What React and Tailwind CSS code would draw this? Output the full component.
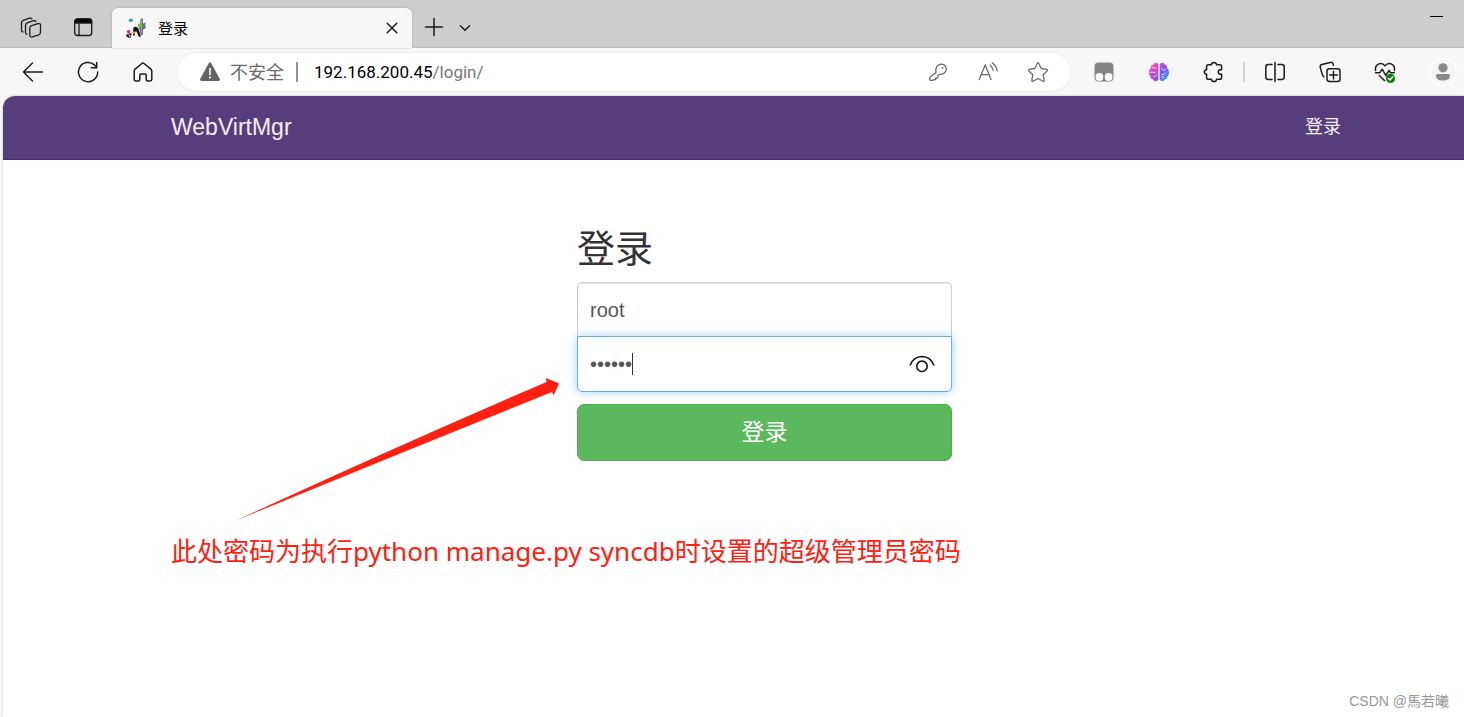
import React from "react";

function Icon({ size = "size-6", stroke = "#1b1b1b", width = 1.3, children }) {
  return (
    <svg
      viewBox="0 0 24 24"
      className={`${size} shrink-0`}
      fill="none"
      stroke={stroke}
      strokeWidth={width}
      strokeLinecap="round"
      strokeLinejoin="round"
      aria-hidden="true"
    >
      {children}
    </svg>
  );
}

function IconButton({ label, className = "w-[55px]", children }) {
  return (
    <button type="button" aria-label={label} className={`flex h-10 shrink-0 items-center justify-center ${className}`}>
      {children}
    </button>
  );
}

function Favicon() {
  return (
    <svg viewBox="0 0 20 20" className="size-5 shrink-0" aria-hidden="true">
      <path d="M14.500 0.500h2.500v5l2.500-1v6l-2.500 1v5l-2.500 1-.5-5-1-2 1-3z" fill="#70747f" />
      <path d="M15 1h1v14h-1z" fill="#9a9dab" />
      <ellipse cx="4.800" cy="2.200" rx="2.100" ry="1.700" fill="#1ea0dc" />
      <circle cx="13.800" cy="7.400" r="1.900" fill="#6cc51e" />
      <path d="M7.500 9.500l2-.8 2.600 1.100 1.400 4.200 1.300 4.500-1.800.6-2.300-4.500-1.500-.3-.8 3.500-1.400-.3v-4z" fill="#141414" />
      <path d="M.8 16l2 .5 1-1.500 1.800.5L5 19.500l-2.300.3L0 18.500z" fill="#222" />
      <path d="M3 17.200l1.400-.4v1.700H3z" fill="#fff" />
      <path d="M9 13.800l1.600-.3 1.600 4.700-2.200.2z" fill="#ededed" />
      <circle cx="2.600" cy="13.800" r="1.800" fill="#e2148c" />
      <circle cx="7.600" cy="14.600" r="1.400" fill="#f2b01e" />
    </svg>
  );
}

function TabStrip() {
  return (
    <header className="flex h-12 items-end border-b border-[#bfbfbf] bg-[#cdcdcd]">
      <div className="flex h-10 items-center pl-[5px]">
        <IconButton label="工作区" className="w-[52px]">
          <Icon>
            <path d="M12.500 10.700l6.500-2q2.500-.6 2.500 1.700v6.900q0 1.900-1.700 2.500l-6.500 2.100q-2.500.6-2.500-1.700v-7q0-1.900 1.700-2.500z" />
            <path d="M7.900 19.300q-1.400-.3-1.400-2v-7q0-1.900 1.700-2.500L14.500 5.700q1.900-.5 2.400.9" />
            <path d="M3.900 16.900q-1.400-.3-1.400-2v-7q0-1.900 1.700-2.500L10.500 3.200q1.900-.5 2.400.5" />
          </Icon>
        </IconButton>
        <IconButton label="标签操作菜单" className="w-[52px]">
          <Icon>
            <rect x="3.700" y="3.900" width="17" height="16.600" rx="2.800" />
            <path d="M3.700 8V6.700a2.800 2.800 0 0 1 2.800-2.800h11.400a2.800 2.800 0 0 1 2.800 2.800V8z" fill="#000" />
            <path d="M8 8v12" />
          </Icon>
        </IconButton>
      </div>
      <div className="relative ml-[3px] flex h-10 w-[300px] translate-y-px items-center rounded-t-md bg-[#f7f7f7] pl-3.5 pr-2 shadow-[0_0_2px_rgba(0,0,0,0.25)]">
        <Favicon />
        <span className="ml-3 grow text-[15px] leading-5 text-black">登录</span>
        <button type="button" aria-label="关闭标签页" className="flex size-6 items-center justify-center">
          <Icon width={1.500}>
            <path d="M7.200 7.200l9.600 9.600M16.800 7.200l-9.600 9.600" />
          </Icon>
        </button>
      </div>
      <div className="flex h-10 items-center">
        <IconButton label="新建标签页" className="w-[43px]">
          <Icon width={1.500}>
            <path d="M12 3.500v17M3.500 12h17" />
          </Icon>
        </IconButton>
        <IconButton label="搜索标签页" className="w-5">
          <Icon width={1.800} size="size-5">
            <path d="M6.500 10.500l5.500 5.500 5.500-5.500" />
          </Icon>
        </IconButton>
      </div>
      <button type="button" aria-label="最小化" className="ml-auto flex h-12 w-[55px] items-start justify-center pt-[17px]">
        <span className="block h-px w-[13px] bg-black" />
      </button>
    </header>
  );
}

function AddressBar() {
  return (
    <div className="ml-2 flex h-[38px] grow items-center rounded-full bg-white pl-5 pr-[7px] shadow-[0_0_3px_rgba(0,0,0,0.08)]">
      <svg viewBox="0 0 24 24" className="size-6 shrink-0" aria-hidden="true">
        <path d="M10.600 3.500q1.400-2.300 2.800 0l8.200 15q1 2.300-1.300 2.600H3.700q-2.300-.3-1.300-2.600z" fill="#636363" />
        <path d="M12 8.500v6" stroke="#fff" strokeWidth="1.600" strokeLinecap="round" />
        <circle cx="12" cy="17.500" r="1.100" fill="#fff" />
      </svg>
      <span className="ml-2 whitespace-nowrap text-lg leading-6 text-[#6a6a6a]">不安全</span>
      <span className="ml-3 h-5 w-0.5 shrink-0 bg-[#929292]" />
      <div className="ml-4 grow whitespace-nowrap font-[Roboto,sans-serif] text-[17px] leading-6 text-[#767676]">
        <span className="text-black">192.168.200.45</span>/login/
      </div>
      <IconButton label="保存密码" className="w-[50px]">
        <Icon stroke="#6b6b6b">
          <path d="M10.300 12.700q-.9-2.500.3-5 1.700-3.300 5.200-3.300 4.200.4 4.700 4.700-.2 4.200-4 5.300-1.500.4-2.700.1L12 16.300v1.900h-2.100V20H7.800l-.5.600H4.600q-.6-.1-.6-.8v-1.700q0-.4.300-.7z" transform="translate(-.2 -.3)" />
          <circle cx="16.600" cy="8" r=".9" fill="#6b6b6b" stroke="none" />
        </Icon>
      </IconButton>
      <IconButton label="大声朗读" className="w-[50px]">
        <Icon stroke="#6b6b6b">
          <path d="M3.200 19.500L9.200 5l5.900 14.500M5.300 14.700h7.900" />
          <path d="M14.200 5.300q2.300 2 2.900 5.200M16.200 2.900q4.300 3 4.900 8.100" />
        </Icon>
      </IconButton>
      <IconButton label="收藏" className="w-[50px]">
        <Icon stroke="#6b6b6b">
          <path d="M11.300 3.300q.7-1.100 1.400 0l2.500 5.200 5.600.8q1.200.4.500 1.400l-4.100 4 1 5.600q0 1.200-1.200.9l-5-2.700-5 2.700q-1.200.3-1.200-.9l1-5.600-4.100-4q-.7-1 .5-1.400l5.600-.8z" />
        </Icon>
      </IconButton>
    </div>
  );
}

function BrainIcon() {
  return (
    <svg viewBox="0 0 24 24" className="size-6" aria-hidden="true">
      <defs>
        <linearGradient id="brainLeft" x1="0" y1="0" x2="0.500" y2="1">
          <stop offset="0" stopColor="#ffa03c" />
          <stop offset="0.400" stopColor="#fb3cc4" />
          <stop offset="1" stopColor="#8b4dff" />
        </linearGradient>
        <linearGradient id="brainRight" x1="0" y1="0" x2="0.600" y2="1">
          <stop offset="0" stopColor="#d845ee" />
          <stop offset="0.500" stopColor="#7556fa" />
          <stop offset="1" stopColor="#32a8ff" />
        </linearGradient>
      </defs>
      <path d="M11.300 4.500v15q-.8 1.900-2.600 1.700-2.200 0-2.700-2-2.600-.3-2.600-3Q1.300 14.500 2 12q0-2.700 1.800-3.700Q3.400 5.500 6 4.800q.8-2.200 3-2 1.800.1 2.300 1.700z" fill="url(#brainLeft)" />
      <path d="M12.700 4.500v15q.8 1.900 2.600 1.700 2.200 0 2.700-2 2.600-.3 2.600-3 2.100-1.700 1.400-4.200 0-2.700-1.800-3.700.4-2.800-2.200-3.500-.8-2.200-3-2-1.800.1-2.300 1.700z" fill="url(#brainRight)" />
      <path d="M5 7.800h3.600q1 .2 1.200 1.200M2.500 12.300h6M6.500 16.500h1.800l1.700-1.800M14.300 8q1 1.900 3 2.300l2-1.700M14.500 14.500h2.300l1.800-1.800M17 17.300l-2.300-.6" fill="none" stroke="#f7e8ff" strokeWidth="1" />
    </svg>
  );
}

function Toolbar() {
  return (
    <div className="flex h-12 items-center bg-[#f7f7f7] pl-[5px]">
      <IconButton label="后退">
        <Icon width={1.500}>
          <path d="M2.500 12h19M11.500 3L2.500 12l9 9" />
        </Icon>
      </IconButton>
      <IconButton label="刷新">
        <Icon width={1.500}>
          <path d="M21.700 12A9.600 9.600 0 1 1 18.500 4.900L20.500 7M20.700 2.500v5.300h-5.400" />
        </Icon>
      </IconButton>
      <IconButton label="主页">
        <Icon width={1.500}>
          <path d="M10.900 3.500q1.100-.9 2.200 0l6.800 5.600q.9.800.9 1.900v8.300q0 1.700-1.700 1.700h-2.400q-1.500 0-1.500-1.500v-4.300q0-1.300-1.300-1.300h-3.800q-1.300 0-1.300 1.300v4.300q0 1.500-1.500 1.500H4.900q-1.700 0-1.700-1.700V11q0-1.100.9-1.900z" />
        </Icon>
      </IconButton>
      <AddressBar />
      <div className="ml-1.5 flex items-center">
        <IconButton label="扩展程序一">
          <svg viewBox="0 0 24 24" className="size-6" aria-hidden="true">
            <rect x="2.500" y="2.500" width="19" height="19" rx="4" fill="#858585" />
            <circle cx="7.400" cy="16.900" r="3.900" fill="#fff" />
            <circle cx="16.600" cy="16.900" r="3.900" fill="#fff" />
          </svg>
        </IconButton>
        <IconButton label="扩展程序二">
          <BrainIcon />
        </IconButton>
        <IconButton label="扩展">
          <Icon width={1.500}>
            <path d="M6.400 4.700h3q.3-2.200 2.600-2.200t2.600 2.200h3.200q1.800 0 1.800 1.800v3.200h-1.200q-2.200.3-2.200 2.300t2.200 2.300h1.200v3.200q0 1.800-1.800 1.800h-3.200q-.3 2.200-2.600 2.200t-2.600-2.200h-3q-1.800 0-1.800-1.800v-3.200Q2.400 14 2.400 12t2.200-2.300V6.500q0-1.800 1.800-1.800z" />
          </Icon>
        </IconButton>
        <span className="mx-0.5 h-5 w-0.5 bg-[#d0d0d0]" />
        <IconButton label="拆分屏幕">
          <Icon width={1.500}>
            <path d="M12 2.500v19M9 4.500H5.200q-2.400 0-2.400 2.400v10.200q0 2.400 2.400 2.400H9M15 4.500h3.800q2.400 0 2.400 2.400v10.200q0 2.400-2.400 2.400H15" />
          </Icon>
        </IconButton>
        <IconButton label="集锦">
          <Icon width={1.500}>
            <rect x="9" y="8.800" width="13" height="12.700" rx="2.500" />
            <path d="M15.500 11.300v7.700M11.700 15.100h7.700M5.900 16.800q-1-.5-1.400-1.700L2.300 7.600q-.6-2.400 1.600-3.100l8.300-2.100q2.200-.5 2.900 1.600l.3 1.300" />
          </Icon>
        </IconButton>
        <IconButton label="浏览器概要">
          <Icon width={1.500}>
            <path d="M2.600 10.600Q1.700 5.600 5.900 3.900q3.700-1.200 6.100 2 2.400-3.200 6.100-2 4.200 1.700 3.300 6.700M2.500 12.700h4.300l2.400-3.500 3.600 6.400 3.300-5.200 1.300 2.300h3.900M6.300 15.500l5.200 5" />
            <circle cx="17.500" cy="18.400" r="4.600" fill="#0f7b0f" stroke="none" />
            <path d="M15.400 18.500l1.500 1.500 2.800-2.900" stroke="#fff" />
          </Icon>
        </IconButton>
        <button type="button" aria-label="用户配置" className="flex h-10 w-[52px] shrink-0 items-center justify-end pr-[7px]">
          <svg viewBox="0 0 28 28" className="size-7" aria-hidden="true">
            <circle cx="14" cy="14" r="13.300" fill="#f5f5f5" stroke="#fff" strokeWidth="1.400" />
            <circle cx="14" cy="9.800" r="4.600" fill="#8a8a8a" />
            <path d="M8.500 16h11q1.500 0 1.500 1.500 0 5.100-7 5.100t-7-5.100q0-1.500 1.500-1.500z" fill="#8a8a8a" />
          </svg>
        </button>
      </div>
    </div>
  );
}

function LoginForm() {
  return (
    <form className="mx-auto w-full max-w-[375px]" onSubmit={(e) => e.preventDefault()}>
      <h1 className="mb-3 text-[38px] leading-[42px] text-[#333]">登录</h1>
      <input
        type="text"
        name="username"
        aria-label="用户名"
        defaultValue="root"
        className="block h-[55px] w-full rounded-t-[5px] border border-[#ccc] bg-white px-3 pt-0.5 text-xl text-[#555] shadow-[inset_0_1px_1px_rgba(0,0,0,0.075)] outline-none"
      />
      <div className="relative -mt-px">
        <input
          type="password"
          name="password"
          aria-label="密码"
          defaultValue="123456"
          className="block h-14 w-full rounded-b-[5px] border border-[#66afe9] bg-white px-3 text-xl text-[#555] caret-transparent shadow-[0_0_10px_rgba(102,175,233,0.6)] outline-none"
        />
        <span className="absolute left-[55px] top-[17px] h-[22px] w-px bg-[#333]" />
        <button type="button" aria-label="显示密码" className="absolute right-4 top-[15px]">
          <svg viewBox="0 0 28 28" className="size-7" fill="none" stroke="#111" strokeWidth="1.600" aria-hidden="true">
            <path d="M2 14.500Q5.200 5.700 14 5.500q8.800.2 12 9" />
            <circle cx="14" cy="15.300" r="5.200" />
          </svg>
        </button>
      </div>
      <button type="submit" className="mt-3 block h-[57px] w-full rounded-[7px] border border-[#4cae4c] bg-[#5cb85c] text-[23px] text-white">
        登录
      </button>
    </form>
  );
}

export default function App() {
  return (
    <div className="flex min-h-screen flex-col overflow-x-hidden bg-[#f7f7f7] font-['Open_Sans','Noto_Sans_CJK_SC',sans-serif]">
      <TabStrip />
      <Toolbar />
      <div className="relative ml-[3px] flex grow flex-col rounded-tl-xl bg-white font-['Liberation_Sans','Noto_Sans_CJK_SC',sans-serif] shadow-[0_0_2px_rgba(0,0,0,0.3)]">
        <nav className="flex h-16 items-center justify-between rounded-tl-xl border-b border-[#463265] bg-[#563d7c] pb-0.5 pl-[168px] pr-[123px] text-[#f3eefb]">
          <a href="#home" className="text-[23px] leading-7">
            WebVirtMgr
          </a>
          <a href="#login" className="text-lg leading-7">
            登录
          </a>
        </nav>
        <main className="pb-20 pl-[62px] pt-[68px]">
          <LoginForm />
        </main>
        <p className="absolute left-[168px] top-[437px] whitespace-nowrap font-['Noto_Sans','Noto_Sans_CJK_SC',sans-serif] text-[26px] leading-9 text-[#ff2012]">
          此处密码为执行python manage.py syncdb时设置的超级管理员密码
        </p>
        <svg viewBox="0 0 324 144" className="absolute left-[232px] top-[281px] h-36 w-[324px]" aria-hidden="true">
          <path d="M1 143.500Q160 70 311.500 5L311 1l13 5.500-5.500 12-1.500-3.500Q160 78 1 143.500z" fill="#ff2012" />
        </svg>
        <p className="absolute bottom-1.5 right-[15px] text-sm leading-5 text-[#999]">CSDN @馬若曦</p>
      </div>
    </div>
  );
}
